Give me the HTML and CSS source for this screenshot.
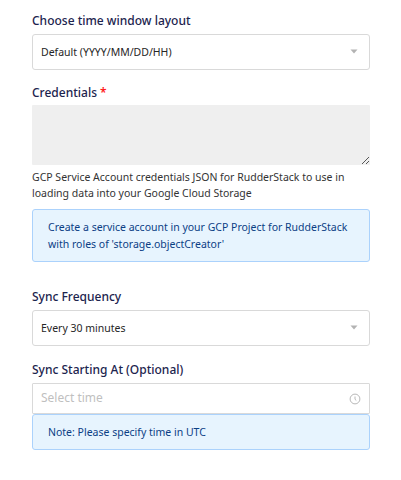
FILE: index.html
```html
<!DOCTYPE html>
<html lang="en">
<head>
<meta charset="utf-8">
<title>Destination settings</title>
<link rel="stylesheet" href="styles.css">
</head>
<body>
<form class="form">
  <div class="field">
    <div class="label">Choose time window layout</div>
    <div class="select"><span>Default (YYYY/MM/DD/HH)</span><svg class="caret" viewBox="0 0 8 5"><path d="M.5 .5h7L4 4.5z"/></svg></div>
  </div>
  <div class="field credentials">
    <div class="label">Credentials <span class="required">*</span></div>
    <div class="textarea"><svg class="grip" viewBox="0 0 9 9"><path d="M1 8L8 1M5 8L8 5"/></svg></div>
    <div class="help">GCP Service Account credentials JSON for RudderStack to use in<br>loading data into your Google Cloud Storage</div>
    <div class="notice">Create a service account in your GCP Project for RudderStack<br>with roles of 'storage.objectCreator'</div>
  </div>
  <div class="field frequency">
    <div class="label">Sync Frequency</div>
    <div class="select"><span>Every 30 minutes</span><svg class="caret" viewBox="0 0 8 5"><path d="M.5 .5h7L4 4.5z"/></svg></div>
  </div>
  <div class="field">
    <div class="label">Sync Starting At (Optional)</div>
    <div class="time"><span>Select time</span><svg class="clock" viewBox="0 0 12 12"><circle cx="6" cy="6" r="4.9"/><path d="M6 3.5v2.8l1.3 1.2"/></svg></div>
    <div class="notice note">Note: Please specify time in UTC</div>
  </div>
</form>
</body>
</html>
```
FILE: styles.css
```css
* { box-sizing: border-box; }
body { margin: 0; background: #fff; font-family: "Noto Sans", sans-serif; }
.form { width: 338px; margin: 11px 0 0 32px; }
.field { margin-bottom: 13px; }
.label { height: 23px; font-size: 12px; line-height: 19px; font-weight: 500; color: #1c244e; white-space: nowrap; }
.required { color: #ff1a1a; font-weight: 600; }
.select, .time { display: flex; align-items: center; justify-content: space-between; height: 36px; padding: 0 12px 1px 8px; border: 1px solid #d9d9d9; border-radius: 3px; font-size: 10.5px; color: #262626; }
.caret { width: 8px; height: 5px; fill: #b3b3b3; }
.textarea { display: flex; align-items: flex-end; justify-content: flex-end; height: 60px; border-radius: 1px; background: #efefef; }
.grip { width: 9px; height: 9px; fill: none; stroke: #444; stroke-width: .9; }
.help { margin-top: 4px; font-size: 10.5px; line-height: 16px; color: #333; white-space: nowrap; }
.notice { height: 53px; margin-top: 8px; padding: 9px 15px; border: 1px solid #abd2fc; border-radius: 3px; background: #e7f4fe; font-size: 10.5px; line-height: 17px; color: #0b4085; white-space: nowrap; }
.credentials { margin-bottom: 25px; }
.credentials .label { height: 22px; }
.frequency { margin-bottom: 14px; }
.select .caret { margin-right: -1px; }
.time { height: 31px; padding: 0 8px 2px; border-radius: 1px; font-size: 12px; color: #bfbfbf; }
.clock { width: 12px; height: 12px; margin-top: 2px; fill: none; stroke: #b8b8b8; }
.note { height: 36px; margin-top: 0; }
```
